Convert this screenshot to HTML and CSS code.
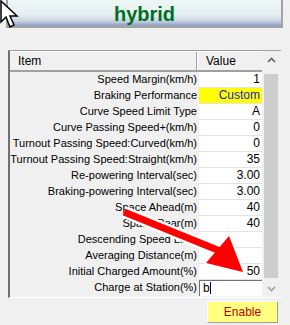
FILE: index.html
```html
<!DOCTYPE html>
<html lang="en">

<head>
    <meta charset="UTF-8">
    <title>Train Settings</title>
    <link rel="stylesheet" href="styles.css">
</head>

<body>

    <!-- Title banner -->
    <div class="banner">hybrid</div>

    <!-- Property grid -->
    <div class="grid-box">
        <div class="grid-list">
            <div class="head">
                <div class="head-item">Item</div>
                <div class="head-value">Value</div>
            </div>
            <div class="row"><div class="name">Speed Margin(km/h)</div><div class="val">1</div></div>
            <div class="row"><div class="name">Braking Performance</div><div class="val yellow">Custom</div></div>
            <div class="row"><div class="name">Curve Speed Limit Type</div><div class="val">A</div></div>
            <div class="row"><div class="name">Curve Passing Speed+(km/h)</div><div class="val">0</div></div>
            <div class="row"><div class="name">Turnout Passing Speed:Curved(km/h)</div><div class="val">0</div></div>
            <div class="row"><div class="name">Turnout Passing Speed:Straight(km/h)</div><div class="val">35</div></div>
            <div class="row"><div class="name">Re-powering Interval(sec)</div><div class="val">3.00</div></div>
            <div class="row"><div class="name">Braking-powering Interval(sec)</div><div class="val">3.00</div></div>
            <div class="row"><div class="name">Space Ahead(m)</div><div class="val">40</div></div>
            <div class="row"><div class="name">Space Rear(m)</div><div class="val">40</div></div>
            <div class="row"><div class="name">Descending Speed Limit</div><div class="val"></div></div>
            <div class="row"><div class="name">Averaging Distance(m)</div><div class="val"></div></div>
            <div class="row"><div class="name">Initial Charged Amount(%)</div><div class="val">50</div></div>
            <div class="row last"><div class="name">Charge at Station(%)</div><div class="val edit">b<span class="caret"></span></div></div>
        </div>
        <div class="scrollbar">
            <div class="arrow">
                <svg width="9" height="6" viewBox="0 0 9 6"><polyline points="1,5 4.5,1.5 8,5" fill="none" stroke="#606060" stroke-width="1.6" /></svg>
            </div>
            <div class="track"><div class="thumb"></div></div>
            <div class="arrow">
                <svg width="9" height="6" viewBox="0 0 9 6"><polyline points="1,1 4.5,4.5 8,1" fill="none" stroke="#a0a0a0" stroke-width="1.6" /></svg>
            </div>
        </div>
    </div>

    <div class="footer">
        <button class="enable">Enable</button>
    </div>

    <!-- red annotation arrow -->
    <svg class="annot" width="290" height="325" viewBox="0 0 290 325">
        <g stroke="#fff" stroke-width="3" stroke-linejoin="round">
            <line x1="124" y1="212" x2="220" y2="251" stroke-width="12" />
            <polygon points="243,272 206,263 229,236" />
        </g>
        <line x1="124" y1="212" x2="220" y2="251" stroke="#f00" stroke-width="7" />
        <polygon points="243,272 206,263 229,236" fill="#f00" />
    </svg>

    <!-- mouse pointer -->
    <svg class="cursor" width="22" height="30" viewBox="0 0 22 30">
        <polygon points="1,1 1,22 6,17 10,27 14,25 10,16 17,16" fill="#fff" stroke="#000" stroke-width="1.5" stroke-linejoin="miter" />
    </svg>

</body>

</html>
```

FILE: styles.css
```css
/* Basic Reset */
body {
    margin: 0;
    padding: 0;
    background: #f0f0f0;
    font-family: 'Liberation Sans', Arial, sans-serif;
    font-size: 11px;
    color: #000;
    position: relative;
    width: 290px;
    height: 325px;
    overflow: hidden;
}

.banner {
    margin: 0 7px 0 6px;
    height: 26px;
    border: 2px solid #a3a3a3;
    border-top: none;
    background: linear-gradient(#eef6f6 0%, #e6f0f2 55%, #c9d4e4 80%, #8e9cc4 100%);
    color: #006e1e;
    font-size: 20px;
    font-weight: bold;
    text-align: center;
    line-height: 28px;
}

.grid-box {
    display: flex;
    margin: 22px 9px 0 8px;
    height: 246px;
    border-top: 1px solid #a0a0a0;
    border-left: 2px solid #707070;
    border-bottom: 1px solid #fff;
    background: #f0f0f0;
}

.grid-list {
    width: 252px;
}

.head {
    display: flex;
    height: 18px;
    border-top: 1px solid #fff;
    border-bottom: 2px solid #a0a0a0;
    line-height: 18px;
    font-size: 12px;
}

.head-item {
    width: 187px;
    padding-left: 8px;
    box-sizing: border-box;
    border-right: 1px solid #a0a0a0;
}

.head-value {
    padding-left: 8px;
    border-left: 1px solid #fff;
}

.row {
    display: flex;
    height: 16px;
    line-height: 15px;
    font-size: 11px;
}

.name {
    width: 188px;
    text-align: right;
    padding-right: 1px;
    box-sizing: border-box;
    white-space: nowrap;
    color: #000;
}

.val {
    width: 63px;
    margin-left: 1px;
    background: #fff;
    text-align: right;
    padding-right: 2px;
    box-sizing: border-box;
    border-bottom: 1px solid #e3e3e3;
    font-size: 12px;
}

.yellow {
    background: #ffff00;
    color: #1c1cd6;
}

.edit {
    text-align: left;
    padding-left: 3px;
    border-top: 1px solid #707070;
    border-left: 1px solid #707070;
    border-bottom: none;
    line-height: 14px;
}

.caret {
    display: inline-block;
    width: 1px;
    height: 12px;
    background: #000;
    vertical-align: -2px;
}

.scrollbar {
    width: 18px;
    display: flex;
    flex-direction: column;
    background: #f0f0f0;
}

.arrow {
    height: 17px;
    display: flex;
    align-items: center;
    justify-content: center;
}

.track {
    flex: 1;
    padding: 6px 2px 2px 2px;
}

.thumb {
    height: 100%;
    background: #cdcdcd;
}

.footer {
    display: flex;
    justify-content: flex-end;
    padding: 3px 12px 0 0;
}

.enable {
    width: 71px;
    height: 22px;
    background: #ffff80;
    color: #c00000;
    border: 1px solid #a0a0a0;
    border-top-color: #fff;
    border-left-color: #fff;
    font-family: 'Liberation Sans', Arial, sans-serif;
    font-size: 12px;
    padding: 0;
}

.annot {
    position: absolute;
    left: 0;
    top: 0;
}

.cursor {
    position: absolute;
    left: 0;
    top: 0;
}
```
